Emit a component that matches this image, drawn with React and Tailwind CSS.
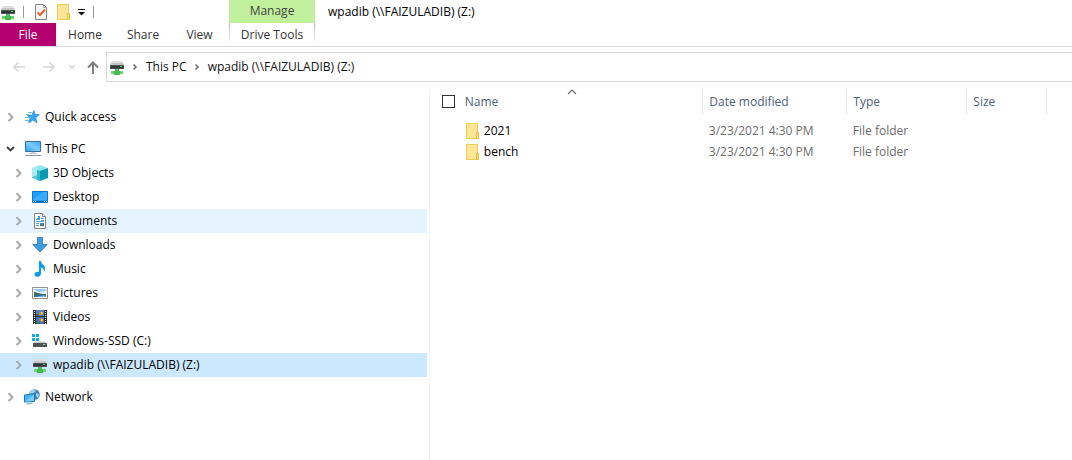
import React from "react";

const svgProps = { width: 16, height: 16, viewBox: "0 0 16 16", "aria-hidden": true, className: "block shrink-0" };

function NetDriveIcon() {
  return (
    <svg {...svgProps}>
      <path d="M3 2h10l2 4H1z" fill="#dfe0e1" />
      <path d="M2 4h12l1 2v1H1V6z" fill="#c3c5c7" />
      <rect x="1" y="6" width="14" height="4" rx="0.6" fill="#4b4e50" />
      <rect x="2" y="7" width="12" height="2" fill="#34373a" />
      <rect x="11" y="7" width="2" height="1" fill="#3be457" />
      <rect x="6" y="10" width="4" height="3" fill="#55bd5c" />
      <rect x="2" y="12" width="12" height="3" rx="0.4" fill="#5fd468" />
      <rect x="5" y="12" width="6" height="4" rx="0.4" fill="#46ba50" />
    </svg>
  );
}

function FolderIcon() {
  return (
    <svg {...svgProps}>
      <path d="M1.500.5h11v15h-11z" fill="#ffe596" stroke="#eccb56" />
      <path d="M11.500 9.500h2v6h-2z" fill="#fbe08a" stroke="#e6bd3c" />
    </svg>
  );
}

function PropertiesIcon() {
  return (
    <svg {...svgProps}>
      <path d="M2.500.5h8l3 3v12h-11z" fill="#f8f8f8" stroke="#858585" />
      <path d="M10.500.5v3h3" fill="none" stroke="#a5a5a5" />
      <path d="M4.500 8.500l2.500 2.500 5-5.500" fill="none" stroke="#e8622c" strokeWidth="2" />
    </svg>
  );
}

function StarIcon() {
  return (
    <svg {...svgProps}>
      <path d="M10 1.500l1 4 4.300.3-3.500 2.700 1.200 5.300-4-2.800-4.300 3 1.500-5-3-2.800h4.500z" fill="#36a9ee" stroke="#2288cc" strokeWidth=".7" />
      <path d="M4 3.500h4M2 5.500h3M1 8.500h4M1 11.500h4" stroke="#65bdf0" />
    </svg>
  );
}

function PcIcon() {
  return (
    <svg {...svgProps} width="18" height="18" viewBox="0 0 18 18">
      <defs>
        <linearGradient id="pc-screen" x1="0" y1="1" x2="1" y2="0">
          <stop offset="0" stopColor="#2aa3f5" />
          <stop offset=".5" stopColor="#7ccbfa" />
          <stop offset="1" stopColor="#38acf6" />
        </linearGradient>
      </defs>
      <path d="M1.500 1.500h15v10h-15z" fill="url(#pc-screen)" stroke="#39719b" />
      <path d="M7 12h4v1H7zM5 13h8v1H5z" fill="#c3ccd3" />
      <path d="M3 15.500h12" stroke="#e1e7eb" />
      <path d="M1 15.500h16" stroke="#8797a3" />
    </svg>
  );
}

function CubeIcon() {
  return (
    <svg {...svgProps}>
      <path d="M0 3l8-3 8 3-8 4z" fill="#91e5ec" />
      <path d="M0 3l8 3v10l-8-3z" fill="#54c8d6" />
      <path d="M16 3l-8 3v10l8-3z" fill="#079bb2" />
      <path d="M0 3l5-1v8l-5 2z" fill="#a9e9ef" />
      <path d="M5 5l3 1v10l-3-1z" fill="#35b7c8" />
    </svg>
  );
}

function DesktopIcon() {
  return (
    <svg {...svgProps}>
      <path d="M.5 2.500h15v11h-15z" fill="#1e9cff" stroke="#1377bd" />
      <path d="M1 10L12 3h3v8H1z" fill="#3babff" />
      <path d="M1 12.500h14" stroke="#086fb8" />
      <path d="M1 12.500h1M3 12.500h1M12 12.500h1M14 12.500h1" stroke="#e4f5ff" />
    </svg>
  );
}

function DocumentIcon() {
  return (
    <svg {...svgProps}>
      <path d="M2.500.5h8l3 3v12h-11z" fill="#fff" stroke="#838383" />
      <path d="M10.500.5v3h3" fill="#eee" stroke="#838383" />
      <path d="M6 3h2v2H6zM5 5h3v2H5z" fill="#3a9ce0" />
      <path d="M4 6.500h4M9 5.500h3M9 7.500h3M4 8.500h8M4 10.500h3M4 12.500h3" stroke="#4ba6e2" />
      <path d="M8 10h4v2H8z" fill="#4a86ab" />
      <path d="M8 12h4v1H8z" fill="#3e6d53" />
    </svg>
  );
}

function DownloadIcon() {
  return (
    <svg {...svgProps}>
      <path d="M5.500.5h5v7h4.700L8 15 .8 7.500h4.700z" fill="#3c9be5" stroke="#2878ba" strokeWidth=".8" />
    </svg>
  );
}

function MusicIcon() {
  return (
    <svg {...svgProps}>
      <path d="M7 0h2c0 3 4 4 4 7.500 0 1.500-.5 2.500-1.200 3.500.3-2.800-.8-4-2.800-4.500v6c0 2-1.500 3.300-3.500 3.300-1.700 0-3-.8-3-2.300 0-2 2-3.200 4.500-2.700z" fill="#0c9cec" />
    </svg>
  );
}

function PictureIcon() {
  return (
    <svg {...svgProps}>
      <path d="M.5 2.500h15v11h-15z" fill="#fff" stroke="#929292" />
      <path d="M2 4h12v8H2z" fill="#8fc9f0" />
      <path d="M2 5c3 0 3 2 6 2s3-1 6-1v3H2z" fill="#e6f4fa" />
      <path d="M2 7c3 0 4 2 12 2v1H2z" fill="#3f6b60" />
      <path d="M2 10h12v2H2z" fill="#2c6fa6" />
      <path d="M5 12c2-1 5-1.500 9-1.500V12z" fill="#6fb2de" />
    </svg>
  );
}

function VideoIcon() {
  return (
    <svg {...svgProps}>
      <path d="M1 1h14v14H1z" fill="#2d2d2d" />
      <path d="M4 1h8v6H4z" fill="#537fca" />
      <path d="M4 8h8v7H4z" fill="#3f72bd" />
      <path d="M7 4l2-2 2 2-1 2H7z" fill="#d68c34" />
      <path d="M9 3h2v2H9z" fill="#d8cb45" />
      <path d="M7 10l2-1 2 1v3H8z" fill="#c47d38" />
      <path d="M9 10h2v2H9z" fill="#d8cb45" />
      <path d="M4 5h3v2H4zM4 13h4v2H4z" fill="#3f6f58" />
      <path d="M2.500 2v13M13.500 2v13" stroke="#f3f3f3" strokeDasharray="1 1" />
    </svg>
  );
}

function SsdIcon() {
  return (
    <svg {...svgProps}>
      <path d="M0 1h3v3H0zM4 1h3v3H4zM0 5h3v3H0zM4 5h3v3H4z" fill="#12a9e8" />
      <path d="M3 8.500h10l2 2.500H1z" fill="#c8cacc" />
      <rect x="1" y="10" width="14" height="4" rx=".6" fill="#505356" />
      <path d="M11 11h2v1h-2z" fill="#8fe394" />
    </svg>
  );
}

function NetworkIcon() {
  return (
    <svg {...svgProps}>
      <circle cx="10.500" cy="5.500" r="5.300" fill="#3b86b8" />
      <path d="M6 3c2-3 5-2.500 6-1.500L10 4 8 5H6zM12 4l3 1-1 4-2-2z" fill="#a2d2ed" />
      <path d="M.5 6l10-1.500v8L.5 13z" fill="#42b5fb" stroke="#2275ad" />
      <path d="M1 12.500L10 5.500v6.500z" fill="#7accfb" />
      <path d="M2.500 15.200l6-1" stroke="#94acbb" strokeWidth="1.200" />
    </svg>
  );
}

function Chevron({ open, small }) {
  if (open) {
    return (
      <svg width="10" height="10" viewBox="0 0 10 10" aria-hidden="true" className="block">
        <path d="M1 3l3.500 3.500L8 3" fill="none" stroke="#404040" strokeWidth="1.900" />
      </svg>
    );
  }
  return small ? (
    <svg width="8" height="8" viewBox="0 0 8 8" aria-hidden="true" className="block shrink-0">
      <path d="M2.500 1.500l2.500 2.500L2.500 6.500" fill="none" stroke="#6e6e6e" strokeWidth="1.600" />
    </svg>
  ) : (
    <svg width="10" height="10" viewBox="0 0 10 10" aria-hidden="true" className="block">
      <path d="M2.500 1.200l4 4-4 4" fill="none" stroke="#a6a6a6" strokeWidth="1.900" />
    </svg>
  );
}

function Arrow({ dir, color }) {
  const paths = {
    left: "M13 7H2M6.500 2.500L2 7l4.500 4.500",
    right: "M1 7h11M7.500 2.500L12 7l-4.500 4.500",
    up: "M7 14V2.500M2 7.500l5-5 5 5",
  };
  return (
    <svg width="14" height="14" viewBox="0 0 14 14" aria-hidden="true" className="block">
      <path d={paths[dir]} fill="none" stroke={color} strokeWidth={dir === "up" ? 2 : 1.5} />
    </svg>
  );
}

const places = [
  { label: "3D Objects", icon: CubeIcon },
  { label: "Desktop", icon: DesktopIcon },
  { label: "Documents", icon: DocumentIcon, tone: "bg-[#e5f3ff]" },
  { label: "Downloads", icon: DownloadIcon },
  { label: "Music", icon: MusicIcon },
  { label: "Pictures", icon: PictureIcon },
  { label: "Videos", icon: VideoIcon },
  { label: "Windows-SSD (C:)", icon: SsdIcon },
  { label: "wpadib (\\\\FAIZULADIB) (Z:)", icon: NetDriveIcon, tone: "bg-[#cce8ff]" },
];

function TreeRow({ label, icon: Icon, open, nested, tone = "" }) {
  return (
    <button type="button" aria-expanded={!!open} className={`flex h-6 w-full items-center text-left text-black ${nested ? "pl-3.5" : "pl-1.5"} ${tone}`}>
      <span className="flex w-[18px] shrink-0">
        <Chevron open={open} />
      </span>
      <span className="flex w-[21px] shrink-0">
        <Icon />
      </span>
      <span className="whitespace-nowrap">{label}</span>
    </button>
  );
}

const files = [
  { name: "2021", date: "3/23/2021 4:30 PM", type: "File folder" },
  { name: "bench", date: "3/23/2021 4:30 PM", type: "File folder" },
];

function TitleBar() {
  return (
    <header className="flex border-b border-[#dadbdc]">
      <div className="flex w-[229px] shrink-0 flex-col">
        <div className="flex h-6 items-center">
          <NetDriveIcon />
          <span className="ml-[7px] h-3 w-px bg-[#9a9a9a]" />
          <button type="button" aria-label="Properties" className="ml-[9px]"><PropertiesIcon /></button>
          <button type="button" aria-label="New folder" className="ml-[7px]"><FolderIcon /></button>
          <button type="button" aria-label="Customize Quick Access Toolbar" className="ml-1.5">
            <svg width="8" height="8" viewBox="0 0 8 8" aria-hidden="true" className="block">
              <path d="M0 1.500h7" stroke="#111" />
              <path d="M0 4h7L3.500 7.500z" fill="#111" />
            </svg>
          </button>
          <span className="ml-[7px] h-3 w-px bg-[#9a9a9a]" />
        </div>
        <div className="-mt-px flex h-[23px] text-[#333]">
          <button type="button" className="w-14 bg-[#b4006e] text-white">File</button>
          <button type="button" className="w-[58px]">Home</button>
          <button type="button" className="w-[58px]">Share</button>
          <button type="button" className="w-[55px]">View</button>
        </div>
      </div>
      <div className="flex w-[86px] shrink-0 flex-col">
        <div className="flex h-[23px] items-center justify-center bg-[#c1f09c] pb-0.5 text-[#444]">Manage</div>
        <div className="flex h-[23px]">
          <span className="h-[18px] w-px bg-linear-to-b from-[#b8b8b8] to-[#ececec]" />
          <button type="button" className="grow whitespace-nowrap text-[#333]">Drive Tools</button>
          <span className="h-[18px] w-px bg-linear-to-b from-[#b8b8b8] to-[#ececec]" />
        </div>
      </div>
      <h1 className="ml-[13px] flex h-6 items-center whitespace-nowrap text-black">{"wpadib (\\\\FAIZULADIB) (Z:)"}</h1>
    </header>
  );
}

function AddressBar() {
  return (
    <nav aria-label="Address" className="mt-[5px] flex h-[30px] items-center">
      <div className="flex w-[106px] shrink-0 items-center pl-3">
        <button type="button" aria-label="Back"><Arrow dir="left" color="#d6d6d6" /></button>
        <button type="button" aria-label="Forward" className="ml-4"><Arrow dir="right" color="#d6d6d6" /></button>
        <button type="button" aria-label="Recent locations" className="ml-3">
          <svg width="8" height="8" viewBox="0 0 8 8" aria-hidden="true" className="block">
            <path d="M1.500 2.500L4 5l2.500-2.500" fill="none" stroke="#cfcfcf" strokeWidth="1.500" />
          </svg>
        </button>
        <button type="button" aria-label="Up" className="ml-2.5"><Arrow dir="up" color="#7d7d7d" /></button>
      </div>
      <div className="flex h-full grow items-center border-y border-l border-[#d9d9d9] pl-0.5 text-[#111]">
        <NetDriveIcon />
        <span className="ml-1.5 flex"><Chevron small /></span>
        <button type="button" className="ml-[7px] whitespace-nowrap">This PC</button>
        <span className="ml-1.5 flex"><Chevron small /></span>
        <button type="button" className="ml-[7px] whitespace-nowrap">{"wpadib (\\\\FAIZULADIB) (Z:)"}</button>
      </div>
    </nav>
  );
}

export default function App() {
  return (
    <div className="flex min-h-screen flex-col bg-white font-['Open_Sans','Noto_Sans',sans-serif] text-[12px] leading-4">
      <TitleBar />
      <AddressBar />
      <div className="flex grow pt-[7px]">
        <aside aria-label="Folders" className="w-2/5 shrink-0 pr-0.5 pt-4">
          <TreeRow label="Quick access" icon={StarIcon} />
          <div className="my-2">
            <TreeRow label="This PC" icon={PcIcon} open />
            {places.map((place) => (
              <TreeRow key={place.label} {...place} nested />
            ))}
          </div>
          <TreeRow label="Network" icon={NetworkIcon} />
        </aside>
        <main className="min-w-0 grow border-l border-[#f2f2f2]">
          <table className="w-full table-fixed border-collapse text-left">
            <colgroup>
              <col className="w-[273px]" />
              <col className="w-36" />
              <col className="w-[120px]" />
              <col className="w-20" />
              <col />
            </colgroup>
            <thead className="text-[#4c607a]">
              <tr className="h-[25px]">
                <th className="relative border-r border-[#e5e5e5] p-0 pl-3 font-normal">
                  <svg width="12" height="6" viewBox="0 0 12 6" aria-hidden="true" className="absolute left-1/2 top-0">
                    <path d="M2 5l4-4 4 4" fill="none" stroke="#6d6d6d" strokeWidth="1.200" />
                  </svg>
                  <div className="flex items-center">
                    <input type="checkbox" aria-label="Select all" className="size-[13px] appearance-none border border-[#333] bg-white" />
                    <span className="ml-2.5">Name</span>
                  </div>
                </th>
                <th className="border-r border-[#e5e5e5] p-0 pl-1.5 font-normal">Date modified</th>
                <th className="border-r border-[#e5e5e5] p-0 pl-1.5 font-normal">Type</th>
                <th className="border-r border-[#e5e5e5] p-0 pl-1.5 font-normal">Size</th>
                <td />
              </tr>
            </thead>
            <tbody className="text-[#6d6d6d]">
              <tr className="h-1.5"><td colSpan={5} className="p-0" /></tr>
              {files.map((file) => (
                <tr key={file.name} className="h-[21px]">
                  <td className="p-0 pl-[35px]">
                    <a href="#" className="flex items-center gap-[3px] text-black">
                      <FolderIcon />
                      <span>{file.name}</span>
                    </a>
                  </td>
                  <td className="whitespace-nowrap p-0 pl-1.5">{file.date}</td>
                  <td className="whitespace-nowrap p-0 pl-1.5">{file.type}</td>
                  <td className="p-0" />
                  <td className="p-0" />
                </tr>
              ))}
            </tbody>
          </table>
        </main>
      </div>
    </div>
  );
}
